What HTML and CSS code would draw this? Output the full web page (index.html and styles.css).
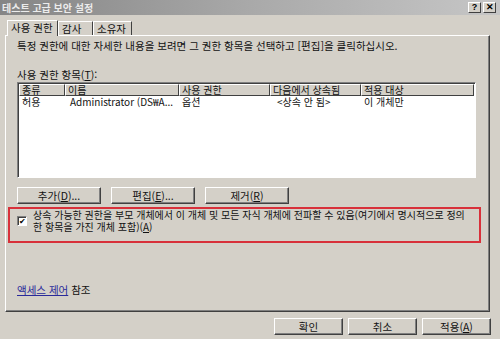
FILE: index.html
```html
<!DOCTYPE html>
<html lang="ko">
<head>
    <meta charset="UTF-8">
    <title>테스트 고급 보안 설정</title>
    <link rel="stylesheet" href="styles.css">
</head>
<body>
<div class="window">
    <div class="titlebar">
        <span class="title">테스트 고급 보안 설정</span>
        <div class="title-btns">
            <span class="tbtn">?</span>
            <span class="tbtn">&#x2715;</span>
        </div>
    </div>

    <div class="main">
        <div class="tabs">
            <div class="tab active">사용 권한</div>
            <div class="tab">감사</div>
            <div class="tab">소유자</div>
        </div>

        <div class="panel">
            <p class="desc">특정 권한에 대한 자세한 내용을 보려면 그 권한 항목을 선택하고 [편집]을 클릭하십시오.</p>
            <p class="label">사용 권한 항목(<u>T</u>):</p>

            <div class="list">
                <div class="list-row list-head">
                    <span>종류</span>
                    <span>이름</span>
                    <span>사용 권한</span>
                    <span>다음에서 상속됨</span>
                    <span>적용 대상</span>
                </div>
                <div class="list-row">
                    <span>허용</span>
                    <span>Administrator (DS₩A...</span>
                    <span>옵션</span>
                    <span>&lt;상속 안 됨&gt;</span>
                    <span>이 개체만</span>
                </div>
            </div>

            <div class="btn-row">
                <button class="btn">추가(<u>D</u>)...</button>
                <button class="btn">편집(<u>E</u>)...</button>
                <button class="btn">제거(<u>R</u>)</button>
            </div>

            <div class="inherit">
                <span class="check">&#x2714;</span>
                <span class="inherit-text">상속 가능한 권한을 부모 개체에서 이 개체 및 모든 자식 개체에 전파할 수 있음(여기에서 명시적으로 정의한 항목을 가진 개체 포함)(<u>A</u>)</span>
            </div>

            <p class="see-also"><a href="#" class="link">액세스 제어</a> 참조</p>
        </div>

        <div class="footer">
            <button class="btn btn-wide">확인</button>
            <button class="btn btn-wide">취소</button>
            <button class="btn btn-wide">적용(<u>A</u>)</button>
        </div>
    </div>
</div>
</body>
</html>
```

FILE: styles.css
```css
* {
    margin: 0;
    padding: 0;
    box-sizing: border-box;
}
body {
    background: #d4d0c8;
    font-family: "Noto Sans CJK KR", "Liberation Sans", sans-serif;
    font-size: 10.5px;
    color: #111;
}
.window {
    width: 500px;
    height: 339px;
    overflow: hidden;
    background: #d4d0c8;
}
/*제목 표시줄*/
.titlebar {
    height: 15px;
    background: linear-gradient(90deg, #858585 0%, #a9a9a9 50%, #c6c6c6 100%);
    display: flex;
    align-items: center;
    justify-content: space-between;
    padding: 0 4px 0 2px;
}
.title {
    color: #ececec;
    font-weight: bold;
    font-size: 10px;
    line-height: 14px;
}
.title-btns {
    display: flex;
    gap: 2px;
}
.tbtn {
    width: 13px;
    height: 11px;
    background: #d4d0c8;
    border: 1px solid;
    border-color: #fff #404040 #404040 #fff;
    font-family: "Liberation Sans", sans-serif;
    font-size: 9px;
    font-weight: bold;
    line-height: 9px;
    text-align: center;
    color: #000;
}
/*본문*/
.main {
    padding: 5px 10px 0 5px;
}
.tabs {
    display: flex;
    padding-left: 2px;
    height: 15px;
    align-items: flex-end;
}
.tab {
    height: 14px;
    line-height: 13px;
    padding: 0 3px;
    white-space: nowrap;
    border: 1px solid;
    border-color: #fff #404040 transparent #fff;
    border-bottom: none;
}
.tab:nth-child(2) {
    width: 35px;
}
.tab:nth-child(3) {
    width: 39px;
}
.tab.active {
    height: 16px;
    width: 51px;
    margin-bottom: -1px;
    background: #d4d0c8;
    position: relative;
    z-index: 1;
}
.panel {
    height: 277px;
    border: 1px solid;
    border-color: #fff #404040 #404040 #fff;
    box-shadow: inset -1px -1px 0 #808080;
    padding: 4px 13px 0 11px;
    display: flex;
    flex-direction: column;
}
.desc {
    line-height: 12px;
}
.label {
    margin-top: 17px;
    line-height: 12px;
}
/*목록*/
.list {
    margin-top: 1px;
    height: 96px;
    background: #fff;
    border: 1px solid;
    border-color: #808080 #fff #fff #808080;
    box-shadow: inset 1px 1px 0 #404040;
    padding: 1px 4px 0 1px;
}
.list-row {
    display: grid;
    grid-template-columns: 46px 114px 91px 91px 113px;
    font-size: 10px;
    line-height: 12px;
}
.list-row span {
    padding-left: 3px;
    white-space: nowrap;
}
.list-row span:nth-child(2) {
    padding-left: 5px;
}
.list-row span:nth-child(4) {
    padding-left: 7px;
}
.list-head span {
    height: 12px;
    background: #d4d0c8;
    border: 1px solid;
    border-color: #fff #404040 #404040 #fff;
    line-height: 10px;
    padding-left: 2px;
}
.list-head span:nth-child(2), .list-head span:nth-child(4) {
    padding-left: 2px;
}
/*버튼*/
.btn-row {
    display: flex;
    gap: 10px;
    margin-top: 9px;
}
.btn {
    width: 84px;
    height: 17px;
    background: #d4d0c8;
    border: 1px solid;
    border-color: #fff #404040 #404040 #fff;
    box-shadow: inset -1px -1px 0 #808080;
    font-family: inherit;
    font-size: 10.5px;
    line-height: 14px;
    color: #111;
}
/*상속 체크박스*/
.inherit {
    margin: 3px -5px 0 -9px;
    height: 36px;
    border: 2px solid #d8303a;
    display: flex;
    align-items: flex-start;
    padding: 0 14px 0 7px;
    gap: 6px;
}
.check {
    flex: none;
    width: 10px;
    height: 10px;
    margin-top: 7px;
    background: #fff;
    border: 1px solid;
    border-color: #808080 #fff #fff #808080;
    box-shadow: inset 1px 1px 0 #404040;
    font-size: 8px;
    line-height: 8px;
    text-align: center;
    color: #000;
}
.inherit-text {
    font-size: 10px;
    line-height: 12px;
    word-break: break-all;
}
.see-also {
    margin-top: 41px;
    line-height: 12px;
}
.link {
    color: #2a2a9a;
}
/*하단 버튼*/
.footer {
    display: flex;
    justify-content: flex-end;
    gap: 5px;
    margin-top: 6px;
    margin-right: -1px;
}
.btn-wide {
    width: 69px;
}
```
